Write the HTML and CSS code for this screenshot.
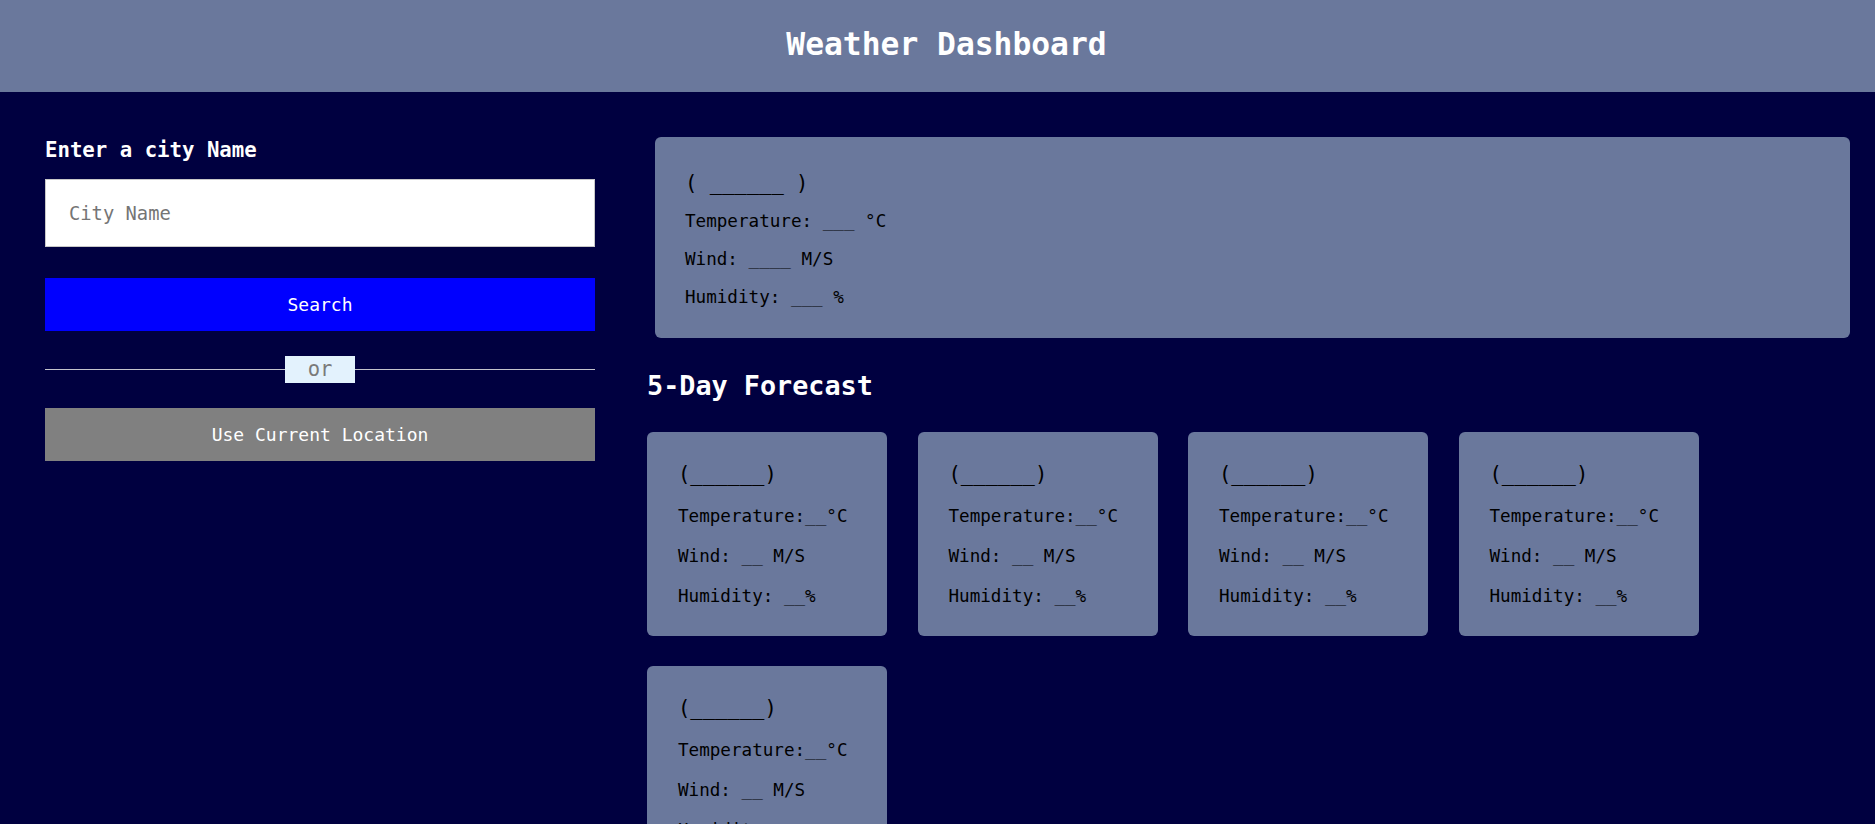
FILE: index.html
```html
<!DOCTYPE html>
<html lang="en">
<head>
<meta charset="utf-8">
<title>Weather Dashboard</title>
<link rel="stylesheet" href="styles.css">
</head>
<body>
<header class="topbar">
  <h1 class="topbar-title">Weather Dashboard</h1>
</header>
<main class="layout">
  <section class="search-panel">
    <h3 class="search-label">Enter a city Name</h3>
    <input class="city-input" type="text" placeholder="City Name">
    <button class="btn btn-search">Search</button>
    <div class="divider">
      <span class="divider-line"></span>
      <span class="divider-text">or</span>
      <span class="divider-line"></span>
    </div>
    <button class="btn btn-location">Use Current Location</button>
  </section>
  <section class="weather-panel">
    <div class="current-card">
      <h3 class="card-title">( ______ )</h3>
      <p class="card-line">Temperature: ___ °C</p>
      <p class="card-line">Wind: ____ M/S</p>
      <p class="card-line">Humidity: ___ %</p>
    </div>
    <h2 class="forecast-heading">5-Day Forecast</h2>
    <div class="forecast-list">
      <div class="forecast-card">
        <h3 class="card-title">(______)</h3>
        <p class="fc-line">Temperature:__°C</p>
        <p class="fc-line">Wind: __ M/S</p>
        <p class="fc-line">Humidity: __%</p>
      </div>
      <div class="forecast-card">
        <h3 class="card-title">(______)</h3>
        <p class="fc-line">Temperature:__°C</p>
        <p class="fc-line">Wind: __ M/S</p>
        <p class="fc-line">Humidity: __%</p>
      </div>
      <div class="forecast-card">
        <h3 class="card-title">(______)</h3>
        <p class="fc-line">Temperature:__°C</p>
        <p class="fc-line">Wind: __ M/S</p>
        <p class="fc-line">Humidity: __%</p>
      </div>
      <div class="forecast-card">
        <h3 class="card-title">(______)</h3>
        <p class="fc-line">Temperature:__°C</p>
        <p class="fc-line">Wind: __ M/S</p>
        <p class="fc-line">Humidity: __%</p>
      </div>
      <div class="forecast-card">
        <h3 class="card-title">(______)</h3>
        <p class="fc-line">Temperature:__°C</p>
        <p class="fc-line">Wind: __ M/S</p>
        <p class="fc-line">Humidity: __%</p>
      </div>
    </div>
  </section>
</main>
</body>
</html>
```
FILE: styles.css
```css
* {
  box-sizing: border-box;
}

body {
  margin: 0;
  background: #000040;
  font-family: "DejaVu Sans Mono", "Liberation Mono", monospace;
  color: #000;
}

.topbar {
  background: #6a789c;
  height: 92px;
  padding: 26px 0 0 18px;
  text-align: center;
}

.topbar-title {
  margin: 0;
  font-size: 31.3px;
  line-height: 36px;
  font-weight: bold;
  color: #fff;
}

.layout {
  display: grid;
  grid-template-columns: 550px 1fr;
  column-gap: 52px;
  padding: 45px 25px 40px 45px;
  align-items: start;
}

.search-panel {
  display: flex;
  flex-direction: column;
}

.search-label {
  margin: 1px 0 17px;
  font-size: 20.7px;
  line-height: 24px;
  font-weight: bold;
  color: #fff;
}

.city-input {
  height: 68px;
  border: 1px solid #c8c8c8;
  padding: 0 23px;
  font-family: inherit;
  font-size: 18.8px;
  color: #333;
  background: #fff;
  outline: none;
}

.city-input::placeholder {
  color: #757575;
}

.btn {
  border: none;
  height: 53px;
  font-family: inherit;
  font-size: 18px;
  color: #fff;
  cursor: pointer;
}

.btn-search {
  margin-top: 31px;
  background: #0000ff;
}

.divider {
  display: flex;
  align-items: center;
  margin: 25px 0;
  height: 27px;
}

.divider-line {
  flex: 1;
  height: 1px;
  background: #c4c4cc;
}

.divider-text {
  width: 70px;
  height: 27px;
  background: #e3f2fd;
  color: #7a7a7a;
  font-size: 20.5px;
  line-height: 27px;
  text-align: center;
}

.btn-location {
  background: #808080;
}

.weather-panel {
  display: flex;
  flex-direction: column;
}

.current-card {
  margin-left: 8px;
  background: #6a789c;
  border-radius: 6px;
  padding: 34px 31px 31px 30px;
}

.card-title {
  margin: 0 0 16px;
  font-size: 20.5px;
  line-height: 24px;
  font-weight: normal;
  color: #000;
}

.card-line {
  margin: 0 0 18px;
  font-size: 17.6px;
  line-height: 20px;
}

.card-line:last-child {
  margin-bottom: 0;
}

.forecast-heading {
  margin: 33px 0 31px;
  font-size: 26.8px;
  line-height: 30px;
  font-weight: bold;
  color: #fff;
}

.forecast-list {
  display: flex;
  flex-wrap: wrap;
  column-gap: 30.5px;
  row-gap: 30px;
}

.forecast-card {
  width: 240px;
  background: #6a789c;
  border-radius: 6px;
  padding: 30px 31px 30px;
}

.forecast-card .card-title {
  margin-bottom: 20px;
}

.fc-line {
  margin: 0 0 20px;
  font-size: 17.6px;
  line-height: 20px;
}

.fc-line:last-child {
  margin-bottom: 0;
}
```
